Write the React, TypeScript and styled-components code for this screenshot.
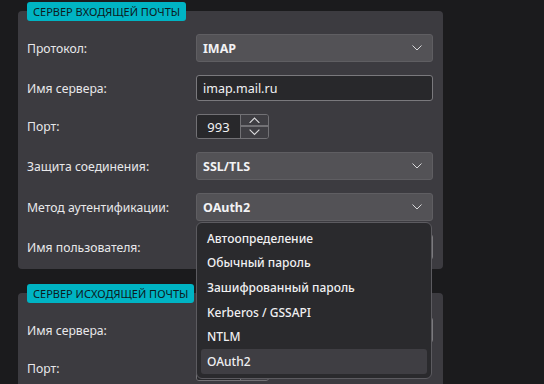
import React from 'react';
import styled, { createGlobalStyle } from 'styled-components';

const GlobalStyle = createGlobalStyle`
  html, body {
    margin: 0;
    padding: 0;
    background: #1b1b1d;
  }
  body {
    font-family: "Noto Sans", "Open Sans", sans-serif;
    color: #e4e4e6;
    width: 544px;
    height: 384px;
    overflow: hidden;
  }
`;

const Page = styled.div`
  display: flex;
  flex-direction: column;
  gap: 15px;
  padding: 2px 0 0 18px;
  width: 425px;
`;

const Group = styled.section`
  display: flex;
  flex-direction: column;
  position: relative;
`;

const Badge = styled.div`
  align-self: flex-start;
  position: relative;
  z-index: 1;
  margin: 0 0 -10px 9px;
  height: 19px;
  padding: 0 6px;
  display: flex;
  align-items: center;
  background: #00b4c4;
  color: #0d1a1d;
  border-radius: 3px;
  font-size: 11px;
  line-height: 1;
  white-space: nowrap;
`;

const Panel = styled.div<{ $pt: number; $pb: number }>`
  display: flex;
  flex-direction: column;
  gap: 13px;
  background: #3c3b40;
  border-radius: 4px;
  padding: ${p => p.$pt}px 10px ${p => p.$pb}px 9px;
`;

const Row = styled.div`
  display: grid;
  grid-template-columns: 169px 237px;
  align-items: center;
  position: relative;
`;

const Label = styled.div`
  font-size: 12.2px;
  color: #e8e8ea;
  white-space: nowrap;
`;

const Combo = styled.div`
  height: 28px;
  box-sizing: border-box;
  background: #535256;
  border: 1px solid #5f5e62;
  border-radius: 3px;
  display: flex;
  align-items: center;
  justify-content: space-between;
  padding: 0 10px 0 6px;
  font-size: 12.5px;
  font-weight: 700;
  color: #f2f2f4;
`;

const Input = styled.div`
  height: 26px;
  box-sizing: border-box;
  background: #28282b;
  border: 1px solid #7a797d;
  border-radius: 3px;
  display: flex;
  align-items: center;
  padding: 0 6px;
  font-size: 12.5px;
  color: #f2f2f4;
`;

const Spin = styled.div`
  width: 73px;
  height: 25px;
  box-sizing: border-box;
  border: 1px solid #727175;
  border-radius: 3px;
  display: grid;
  grid-template-columns: 44px 1fr;
  overflow: hidden;
`;

const SpinValue = styled.div`
  background: #28282b;
  display: flex;
  align-items: center;
  justify-content: center;
  font-size: 13px;
  color: #f2f2f4;
  border-right: 1px solid #727175;
`;

const SpinButtons = styled.div`
  display: grid;
  grid-template-rows: 1fr 1fr;
  background: #3f3e43;
`;

const SpinButton = styled.div<{ $top?: boolean }>`
  display: flex;
  align-items: center;
  justify-content: center;
  border-bottom: ${p => (p.$top ? '2px solid #727175' : 'none')};
`;

const Popup = styled.div`
  position: absolute;
  left: 169px;
  top: 29px;
  z-index: 5;
  width: 236px;
  box-sizing: border-box;
  background: #2a2a2d;
  border: 1px solid #5c5b60;
  border-radius: 6px;
  padding: 3px 4px 4px;
  display: flex;
  flex-direction: column;
`;

const Option = styled.div<{ $selected?: boolean }>`
  height: 24.6px;
  display: flex;
  align-items: center;
  padding-left: 6px;
  border-radius: 3px;
  font-size: 12px;
  font-weight: 500;
  color: #f0f0f2;
  background: ${p => (p.$selected ? '#3f3e43' : 'transparent')};
`;

const Chevron = ({ up = false, w = 10 }: { up?: boolean; w?: number }) => (
  <svg width={w} height={w / 2 + 1} viewBox="0 0 10 6" fill="none">
    <path
      d={up ? 'M0.5 5.5 L5 1 L9.5 5.5' : 'M0.5 0.5 L5 5 L9.5 0.5'}
      stroke="#d8d8da"
      strokeWidth="1"
    />
  </svg>
);

const authOptions = [
  'Автоопределение',
  'Обычный пароль',
  'Зашифрованный пароль',
  'Kerberos / GSSAPI',
  'NTLM',
  'OAuth2',
];

const PortField = () => (
  <Spin>
    <SpinValue>993</SpinValue>
    <SpinButtons>
      <SpinButton $top>
        <Chevron up w={11} />
      </SpinButton>
      <SpinButton>
        <Chevron w={11} />
      </SpinButton>
    </SpinButtons>
  </Spin>
);

export default function App() {
  return (
    <>
      <GlobalStyle />
      <Page>
        <Group>
          <Badge>СЕРВЕР ВХОДЯЩЕЙ ПОЧТЫ</Badge>
          <Panel $pt={23} $pb={9}>
            <Row>
              <Label>Протокол:</Label>
              <Combo>
                IMAP
                <Chevron />
              </Combo>
            </Row>
            <Row>
              <Label>Имя сервера:</Label>
              <Input>imap.mail.ru</Input>
            </Row>
            <Row>
              <Label>Порт:</Label>
              <PortField />
            </Row>
            <Row>
              <Label>Защита соединения:</Label>
              <Combo>
                SSL/TLS
                <Chevron />
              </Combo>
            </Row>
            <Row>
              <Label>Метод аутентификации:</Label>
              <Combo>
                OAuth2
                <Chevron />
              </Combo>
              <Popup>
                {authOptions.map(o => (
                  <Option key={o} $selected={o === 'OAuth2'}>
                    {o}
                  </Option>
                ))}
              </Popup>
            </Row>
            <Row>
              <Label>Имя пользователя:</Label>
              <Input />
            </Row>
          </Panel>
        </Group>
        <Group>
          <Badge>СЕРВЕР ИСХОДЯЩЕЙ ПОЧТЫ</Badge>
          <Panel $pt={24} $pb={9}>
            <Row>
              <Label>Имя сервера:</Label>
              <Input />
            </Row>
            <Row>
              <Label>Порт:</Label>
              <PortField />
            </Row>
          </Panel>
        </Group>
      </Page>
    </>
  );
}
